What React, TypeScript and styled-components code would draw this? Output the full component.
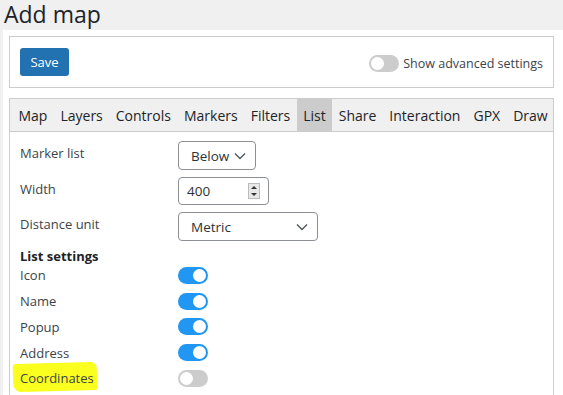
import React from 'react'
import styled, { createGlobalStyle } from 'styled-components'

const GlobalStyle = createGlobalStyle`
  html, body {
    margin: 0;
    padding: 0;
    background: #f0f0f1;
    font-family: "Open Sans", "Noto Sans", sans-serif;
    color: #2c3338;
    overflow: hidden;
  }
`

const Page = styled.div`
  width: 563px;
  height: 395px;
  overflow: hidden;
`
const Title = styled.h1`
  margin: 0;
  padding: 0 0 0 4px;
  height: 30px;
  font-size: 23px;
  font-weight: 400;
  line-height: 28px;
  color: #1d2327;
`
const Panel = styled.div`
  margin-left: 3px;
  background: #fff;
  padding: 6px 9px 0 6px;
  height: 400px;
`
const TopBox = styled.div`
  border: 1px solid #ccc;
  height: 50px;
  display: flex;
  align-items: center;
  justify-content: space-between;
  padding: 0 10px;
`
const SaveButton = styled.button`
  background: #2271b1;
  color: #fff;
  border: none;
  border-radius: 3px;
  width: 49px;
  height: 28px;
  font-family: inherit;
  font-size: 13px;
  padding: 0;
`
const AdvLabel = styled.label`
  display: flex;
  align-items: center;
  gap: 4px;
  font-size: 12.5px;
  color: #3c434a;
  margin-top: 2px;
`
const TabBox = styled.div`
  margin-top: 10px;
  border: 1px solid #ccc;
  border-bottom: none;
`
const TabBar = styled.div`
  display: flex;
  background: #f0f0f0;
  border-bottom: 1px solid #ccc;
  height: 32px;
  padding-left: 2px;
`
const Tab = styled.div<{ $active?: boolean }>`
  padding: 0 6.5px;
  display: flex;
  align-items: center;
  font-size: 14px;
  color: #1d2327;
  background: ${p => (p.$active ? '#ccc' : 'transparent')};
`
const Content = styled.div`
  padding: 9px 10px 0 10px;
  display: grid;
  grid-template-columns: 158px 1fr;
  align-items: center;
  row-gap: 7px;
`
const Label = styled.div`
  font-size: 13px;
  color: #3c434a;
  align-self: start;
  padding-top: 3px;
`
const Heading = styled.div`
  grid-column: 1 / span 2;
  font-size: 13px;
  font-weight: 700;
  color: #1d2327;
  margin-top: -1px;
  margin-bottom: -6px;
`
const Select = styled.div<{ $w: number }>`
  width: ${p => p.$w}px;
  height: 29px;
  box-sizing: border-box;
  border: 1px solid #8c8f94;
  border-radius: 4px;
  display: flex;
  align-items: center;
  justify-content: space-between;
  padding: 0 9px 0 12px;
  font-size: 13.5px;
  color: #2c3338;
`
const NumberBox = styled.div`
  width: 91px;
  height: 28px;
  box-sizing: border-box;
  border: 1px solid #8c8f94;
  border-radius: 4px;
  display: flex;
  align-items: center;
  justify-content: space-between;
  padding: 0 8px 0 8px;
  font-size: 13.5px;
`
const Spin = styled.div`
  width: 12px;
  height: 16px;
  background: #e8e8e8;
  border: 1px solid #bbb;
  display: flex;
  flex-direction: column;
  align-items: center;
  justify-content: space-around;
  box-sizing: border-box;
`
const Tri = styled.div<{ $up?: boolean }>`
  width: 0;
  height: 0;
  border-left: 3px solid transparent;
  border-right: 3px solid transparent;
  ${p => (p.$up ? 'border-bottom: 3px solid #333;' : 'border-top: 3px solid #333;')}
`
const SwitchRow = styled.div`
  display: contents;
`
const SwitchLabel = styled.div`
  font-size: 13px;
  color: #3c434a;
  height: 18.75px;
  display: flex;
  align-items: center;
`
const Marker = styled.span`
  display: inline-block;
  background: #fbff1f;
  padding: 6px 3px 4px 7px;
  margin: -7px 0 -4px -7px;
  border-radius: 3px 6px 2px 8px;
  transform: rotate(-1.5deg);
  & > span {
    display: inline-block;
    transform: rotate(1.5deg);
  }
`
const Toggle = styled.div<{ $on: boolean }>`
  width: 30px;
  height: 17px;
  border-radius: 9px;
  background: ${p => (p.$on ? '#2196f3' : '#ccc')};
  position: relative;
  &::after {
    content: '';
    position: absolute;
    top: 2px;
    left: ${p => (p.$on ? '15px' : '2px')};
    width: 13px;
    height: 13px;
    border-radius: 50%;
    background: #fff;
  }
`

const Chevron = () => (
  <svg width="12" height="8" viewBox="0 0 12 8">
    <path d="M1 1.5 L6 6.5 L11 1.5" fill="none" stroke="#50575e" strokeWidth="1.4" />
  </svg>
)

const tabs = ['Map', 'Layers', 'Controls', 'Markers', 'Filters', 'List', 'Share', 'Interaction', 'GPX', 'Draw']
const switches: [string, boolean][] = [
  ['Icon', true],
  ['Name', true],
  ['Popup', true],
  ['Address', true],
  ['Coordinates', false],
  ['Distance', true]
]

export default function App() {
  return (
    <Page>
      <GlobalStyle />
      <Title>Add map</Title>
      <Panel>
        <TopBox>
          <SaveButton>Save</SaveButton>
          <AdvLabel>
            <Toggle $on={false} />
            Show advanced settings
          </AdvLabel>
        </TopBox>
        <TabBox>
          <TabBar>
            {tabs.map(t => (
              <Tab key={t} $active={t === 'List'}>
                {t}
              </Tab>
            ))}
          </TabBar>
          <Content>
            <Label>Marker list</Label>
            <Select $w={78}>
              Below <Chevron />
            </Select>
            <Label>Width</Label>
            <NumberBox>
              400
              <Spin>
                <Tri $up />
                <Tri />
              </Spin>
            </NumberBox>
            <Label>Distance unit</Label>
            <Select $w={140}>
              Metric <Chevron />
            </Select>
            <Heading>List settings</Heading>
            {switches.map(([name, on]) => (
              <SwitchRow key={name}>
                <SwitchLabel>
                  {name === 'Coordinates' ? (
                    <Marker>
                      <span>{name}</span>
                    </Marker>
                  ) : (
                    name
                  )}
                </SwitchLabel>
                <Toggle $on={on} />
              </SwitchRow>
            ))}
          </Content>
        </TabBox>
      </Panel>
    </Page>
  )
}
